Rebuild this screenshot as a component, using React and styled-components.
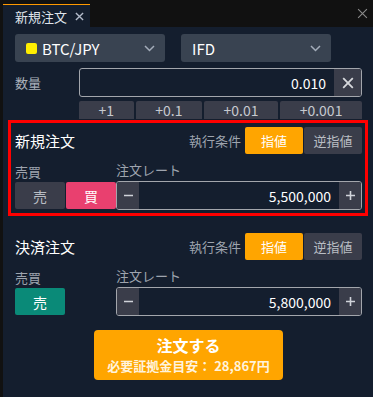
import styled, {createGlobalStyle} from "styled-components";

const GlobalStyle = createGlobalStyle`
  body {
    margin: 0;
    background: #111111;
    font-family: "Noto Sans CJK JP", "Noto Sans", sans-serif;
  }
  * { box-sizing: border-box; }
`;

const Screen = styled.div`
  width: 373px;
  height: 397px;
  background: #111111;
  display: flex;
  flex-direction: column;
  overflow: hidden;
`;

const TabBar = styled.div`
  height: 27px;
  flex: none;
  display: flex;
  align-items: flex-end;
  justify-content: space-between;
  padding-left: 3px;
`;

const Tab = styled.div`
  width: 87px;
  height: 23px;
  border-top: 1px solid #ff9900;
  background: #141e2e;
  display: flex;
  align-items: center;
  padding-left: 12px;
  gap: 8px;
  color: #dfe3ea;
  font-size: 13px;
`;

const WindowClose = styled.div`
  align-self: flex-start;
  margin: 8px 5px 0 0;
  display: flex;
`;

const Panel = styled.div`
  flex: 1;
  margin-left: 3px;
  background: #141e2e;
  padding: 7px 11px 0 12px;
  display: flex;
  flex-direction: column;
`;

const SelectRow = styled.div`
  display: flex;
  gap: 16px;
`;

const Select = styled.div`
  width: 150px;
  height: 28px;
  border-radius: 3px;
  background: #394351;
  display: flex;
  align-items: center;
  padding: 0 10px 0 11px;
  gap: 5px;
  color: #ffffff;
  font-size: 15px;
`;

const Swatch = styled.span`
  width: 11px;
  height: 11px;
  border-radius: 2px;
  background: #ffee00;
`;

const SelectText = styled.span`
  flex: 1;
`;

const FieldRow = styled.div`
  display: flex;
  align-items: center;
  margin-top: 6px;
`;

const FieldLabel = styled.div`
  width: 64px;
  color: #aab1bb;
  font-size: 13px;
`;

const InputBox = styled.div`
  flex: ${(p) => (p.$grow ? "1" : "none")};
  height: 29px;
  border: 1px solid #a3a6ac;
  border-radius: 3px;
  display: flex;
  align-items: stretch;
  overflow: hidden;
`;

const InputValue = styled.div`
  flex: 1;
  display: flex;
  align-items: center;
  justify-content: flex-end;
  padding-right: 8px;
  color: #ffffff;
  font-size: 14px;
`;

const SideButton = styled.div`
  width: ${(p) => p.$w || 22}px;
  background: #3a3d4a;
  display: flex;
  align-items: center;
  justify-content: center;
  color: #d0d3d9;
`;

const StepRow = styled.div`
  display: flex;
  gap: 2px;
  margin: 4px 0 0 64px;
`;

const StepButton = styled.div`
  flex: auto;
  height: 18px;
  background: #3a3d4a;
  color: #c6c9cf;
  font-size: 14px;
  display: flex;
  align-items: center;
  justify-content: center;
  border-radius: 2px 2px 0 0;
`;

const Section = styled.div`
  margin: ${(p) => (p.$highlight ? "1px -6px 0 -7px" : "10px -6px 0 -7px")};
  border: 3px solid ${(p) => (p.$highlight ? "#ff0000" : "transparent")};
  padding: 4px 3px 3px 4px;
`;

const SectionHeader = styled.div`
  height: 27px;
  display: flex;
  align-items: center;
`;

const SectionTitle = styled.div`
  flex: 1;
  color: #ffffff;
  font-size: 15px;
`;

const CondLabel = styled.div`
  color: #9ea4ae;
  font-size: 13px;
  margin-right: 4px;
`;

const Toggle = styled.div`
  width: 58px;
  height: 27px;
  margin-left: ${(p) => (p.$second ? 1 : 0)}px;
  border-radius: 2px;
  background: ${(p) => (p.$active ? "#ffa500" : "#3a3d4a")};
  color: ${(p) => (p.$active ? "#ffffff" : "#b9bdc4")};
  font-size: 13px;
  display: flex;
  align-items: center;
  justify-content: center;
`;

const SectionBody = styled.div`
  display: flex;
  align-items: flex-end;
  margin-top: 7px;
`;

const SideCol = styled.div`
  width: 101px;
  display: flex;
  flex-direction: column;
`;

const RateCol = styled.div`
  flex: 1;
  display: flex;
  flex-direction: column;
`;

const SmallLabel = styled.div`
  height: 18px;
  line-height: 18px;
  color: #9ea4ae;
  font-size: 13px;
  margin-bottom: ${(p) => p.$mb || 1}px;
`;

const SideButtons = styled.div`
  display: flex;
  gap: 1px;
  margin-bottom: 1px;
`;

const SideBtn = styled.div`
  width: 50px;
  height: 27px;
  border-radius: 2px;
  background: ${(p) => p.$bg};
  color: ${(p) => p.$color};
  font-size: 14px;
  display: flex;
  align-items: center;
  justify-content: center;
`;

const OrderButton = styled.div`
  align-self: center;
  margin-top: 8px;
  width: 189px;
  height: 50px;
  border-radius: 4px;
  background: #ffa500;
  color: #ffffff;
  font-weight: 700;
  display: flex;
  flex-direction: column;
  align-items: center;
  justify-content: center;
  line-height: 1.35;
`;

const OrderMain = styled.div`
  font-size: 16px;
`;

const OrderSub = styled.div`
  font-size: 13px;
  color: #fff3dd;
`;

const Cross = ({size = 10, color = "#ccc", width = 1.4}) => (
    <svg width={size} height={size} viewBox="0 0 10 10">
        <path d="M1 1L9 9M9 1L1 9" stroke={color} strokeWidth={width} fill="none"/>
    </svg>
);

const Chevron = () => (
    <svg width="11" height="7" viewBox="0 0 11 7">
        <path d="M1 1L5.5 5.5L10 1" stroke="#a4adba" strokeWidth="1.5" fill="none"/>
    </svg>
);

const Minus = () => (
    <svg width="11" height="11" viewBox="0 0 11 11">
        <path d="M1 5.5H10" stroke="#d0d3d9" strokeWidth="1.6"/>
    </svg>
);

const Plus = () => (
    <svg width="11" height="11" viewBox="0 0 11 11">
        <path d="M1 5.5H10M5.5 1V10" stroke="#d0d3d9" strokeWidth="1.6"/>
    </svg>
);

const RateInput = ({value}) => (
    <InputBox>
        <SideButton><Minus/></SideButton>
        <InputValue>{value}</InputValue>
        <SideButton><Plus/></SideButton>
    </InputBox>
);

const OrderSection = ({title, highlight, rate, children}) => (
    <Section $highlight={highlight}>
        <SectionHeader>
            <SectionTitle>{title}</SectionTitle>
            <CondLabel>執行条件</CondLabel>
            <Toggle $active>指値</Toggle>
            <Toggle $second>逆指値</Toggle>
        </SectionHeader>
        <SectionBody>
            <SideCol>
                <SmallLabel>売買</SmallLabel>
                <SideButtons>{children}</SideButtons>
            </SideCol>
            <RateCol>
                <SmallLabel $mb={2}>注文レート</SmallLabel>
                <RateInput value={rate}/>
            </RateCol>
        </SectionBody>
    </Section>
);

export default function App() {
    return <>
        <GlobalStyle/>
        <Screen>
            <TabBar>
                <Tab>
                    新規注文
                    <Cross size={9} color="#b4bccb" width={1.5}/>
                </Tab>
                <WindowClose><Cross size={11} color="#8a8a8a" width={1}/></WindowClose>
            </TabBar>
            <Panel>
                <SelectRow>
                    <Select>
                        <Swatch/>
                        <SelectText>BTC/JPY</SelectText>
                        <Chevron/>
                    </Select>
                    <Select>
                        <SelectText>IFD</SelectText>
                        <Chevron/>
                    </Select>
                </SelectRow>
                <FieldRow>
                    <FieldLabel>数量</FieldLabel>
                    <InputBox $grow>
                        <InputValue>0.010</InputValue>
                        <SideButton $w={27}><Cross size={12} color="#d6d8dc" width={1.5}/></SideButton>
                    </InputBox>
                </FieldRow>
                <StepRow>
                    {["+1", "+0.1", "+0.01", "+0.001"].map((s) => <StepButton key={s}>{s}</StepButton>)}
                </StepRow>
                <OrderSection title="新規注文" highlight rate="5,500,000">
                    <SideBtn $bg="#3a3d4a" $color="#b9bdc4">売</SideBtn>
                    <SideBtn $bg="#e9406f" $color="#ffffff">買</SideBtn>
                </OrderSection>
                <OrderSection title="決済注文" rate="5,800,000">
                    <SideBtn $bg="#0a8a78" $color="#ffffff">売</SideBtn>
                </OrderSection>
                <OrderButton>
                    <OrderMain>注文する</OrderMain>
                    <OrderSub>必要証拠金目安： 28,867円</OrderSub>
                </OrderButton>
            </Panel>
        </Screen>
    </>;
}
